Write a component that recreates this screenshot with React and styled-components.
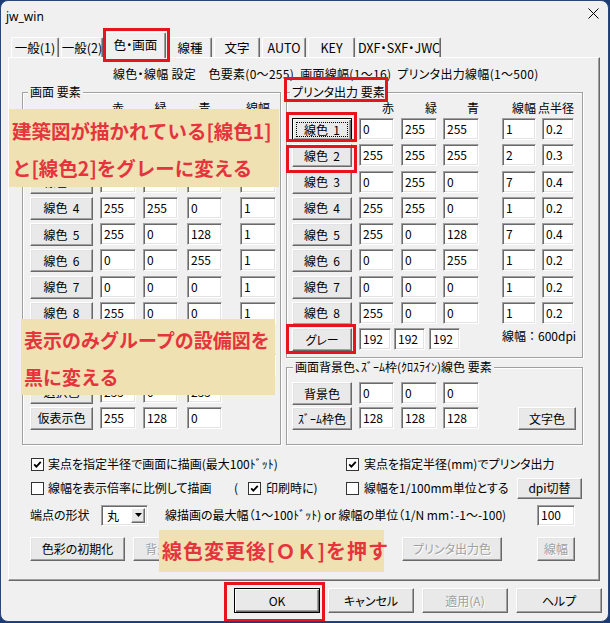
import React from 'react';
import styled, { createGlobalStyle, css } from 'styled-components';

const UI = `"Noto Sans CJK JP", "Noto Sans", sans-serif`;
const px = (v) => (typeof v === 'number' ? `${v}px` : v);

const GlobalStyle = createGlobalStyle`
  *, *::before, *::after { box-sizing: border-box; }
  html, body { margin: 0; padding: 0; }
  body { background: #1c3a73; width: 610px; height: 623px; overflow: hidden; }
`;

const Window = styled.div`
  position: relative;
  width: 609px;
  height: 622px;
  background: #f0f0f0;
  border: 1px solid #2a4676;
  border-radius: 8px;
  overflow: hidden;
  font-family: ${UI};
  font-size: 12px;
  color: #000;
  font-feature-settings: "palt" 1;
`;

const TitleBar = styled.div`
  height: 31px;
  display: flex;
  align-items: center;
  justify-content: space-between;
  padding: 0 9px 0 5px;
`;

const Title = styled.span`
  font-family: "Noto Sans", sans-serif;
  font-size: 12px;
  line-height: 16px;
`;

const CloseGlyph = styled.svg`
  align-self: flex-start;
  margin-top: 7px;
`;

const TabStrip = styled.div`
  position: relative;
  z-index: 1;
  display: flex;
  align-items: flex-end;
  gap: 2px;
  height: 25px;
  padding-left: 10px;
`;

const Tab = styled.div`
  flex: none;
  width: ${(p) => p.$w}px;
  height: ${(p) => (p.$active ? 26 : 20)}px;
  margin-bottom: ${(p) => (p.$active ? -1 : 0)}px;
  padding-bottom: ${(p) => (p.$active ? 2 : 0)}px;
  display: flex;
  align-items: center;
  justify-content: center;
  background: #f0f0f0;
  border: 1px solid;
  border-bottom: none;
  border-color: #fff #696969 transparent #fff;
  border-radius: 2px 2px 0 0;
  box-shadow: inset -1px 0 0 #a0a0a0;
  white-space: nowrap;
  line-height: 16px;
  font-size: 12.5px;
`;

const Panel = styled.div`
  margin-left: 7px;
  width: 592px;
  height: 524px;
  border: 1px solid;
  border-color: #fff #696969 #696969 #fff;
  box-shadow: inset -1px -1px 0 #a0a0a0;
  padding-top: 8px;
`;

const Heading = styled.div`
  line-height: 16px;
  padding-left: 104px;
  white-space: nowrap;
  letter-spacing: 0.3px;
`;

const Columns = styled.div`
  display: flex;
  align-items: flex-start;
  gap: 5px;
  margin-top: 10px;
  padding-left: 13px;
`;

const Stack = styled.div`
  display: flex;
  flex-direction: column;
  gap: 9px;
`;

const Group = styled.div`
  flex: none;
  width: ${(p) => p.$w}px;
  height: ${(p) => p.$h}px;
  border: 1px solid #a0a0a0;
  box-shadow: inset 1px 1px 0 #fff, 1px 1px 0 #fff;
  padding-left: ${(p) => p.$pl}px;
`;

const Legend = styled.div`
  width: fit-content;
  margin: -9px 0 0 ${(p) => px(p.$lm ?? -2)};
  padding: 0 2px;
  background: #f0f0f0;
  line-height: 16px;
  white-space: nowrap;
`;

const HeadRow = styled.div`
  display: flex;
  height: 16px;
  line-height: 16px;
`;

const HeadCell = styled.div`
  flex: none;
  width: ${(p) => p.$w}px;
  margin-left: ${(p) => px(p.$ml || 0)};
  display: flex;
  justify-content: ${(p) => (p.$align === 'right' ? 'flex-end' : 'center')};
  white-space: nowrap;
`;

const Rows = styled.div`
  display: flex;
  flex-direction: column;
  gap: ${(p) => p.$gap}px;
  margin-top: ${(p) => p.$mt}px;
`;

const Row = styled.div`
  display: flex;
  align-items: flex-start;
  height: 23px;
`;

const Btn = styled.button`
  position: relative;
  flex: none;
  width: ${(p) => p.$w}px;
  height: ${(p) => p.$h || 23}px;
  margin-left: ${(p) => px(p.$ml || 0)};
  padding: 0;
  font-family: inherit;
  font-size: 12px;
  font-feature-settings: "palt" 1;
  line-height: 16px;
  color: #000;
  background: #e9e9e9;
  border: 1px solid;
  border-color: #fff #696969 #696969 #fff;
  box-shadow: inset -1px -1px 0 #a0a0a0, inset 1px 1px 0 #e3e3e3;
  white-space: nowrap;
  display: flex;
  align-items: center;
  justify-content: center;
  ${(p) =>
    p.disabled &&
    css`
      color: #a0a0a0;
      text-shadow: 1px 1px 0 #fff;
    `}
  ${(p) =>
    (p.$focus || p.$default) &&
    css`
      border-color: #000;
      box-shadow: inset 1px 1px 0 #fff, inset -1px -1px 0 #696969, inset -2px -2px 0 #a0a0a0;
    `}
  ${(p) =>
    p.$focus &&
    css`
      &::after {
        content: '';
        position: absolute;
        inset: 3px;
        border: 1px dotted #000;
      }
    `}
`;

const Field = styled.div`
  flex: none;
  width: ${(p) => p.$w}px;
  height: ${(p) => p.$h || 22}px;
  margin-left: ${(p) => px(p.$ml || 0)};
  margin-right: ${(p) => px(p.$mr || 0)};
  background: #fff;
  border: 1px solid;
  border-color: #a0a0a0 #fff #fff #a0a0a0;
  box-shadow: inset 1px 1px 0 #696969, inset -1px -1px 0 #e3e3e3;
  padding-left: 3px;
  display: flex;
  align-items: center;
  white-space: nowrap;
  overflow: hidden;
  line-height: 16px;
`;

const Text = styled.span`
  flex: none;
  width: ${(p) => (p.$w ? `${p.$w}px` : 'auto')};
  margin-left: ${(p) => px(p.$ml || 0)};
  line-height: 16px;
  white-space: nowrap;
  font-feature-settings: ${(p) => (p.$plain ? 'normal' : '"palt" 1')};
`;

const OptArea = styled.div`
  margin-top: 11px;
  padding: 0 17px 0 22px;
`;

const OptRow = styled.div`
  display: flex;
  align-items: center;
  height: ${(p) => p.$h}px;
  margin-top: ${(p) => p.$mt || 0}px;
`;

const Half = styled.div`
  flex: none;
  width: ${(p) => (p.$w ? `${p.$w}px` : 'auto')};
  flex-grow: ${(p) => (p.$w ? 0 : 1)};
  display: flex;
  align-items: center;
`;

const CheckBox = styled.span`
  flex: none;
  width: 13px;
  height: 13px;
  margin-left: ${(p) => px(p.$ml || 0)};
  background: #fff;
  border: 1px solid #333;
  display: flex;
  align-items: center;
  justify-content: center;
`;

const Select = styled.div`
  flex: none;
  width: 47px;
  height: 21px;
  background: #fff;
  border: 1px solid;
  border-color: #a0a0a0 #fff #fff #a0a0a0;
  box-shadow: inset 1px 1px 0 #696969, inset -1px -1px 0 #e3e3e3;
  display: flex;
  align-items: center;
  justify-content: space-between;
  padding: 2px 2px 2px 5px;
`;

const DropBtn = styled.span`
  width: 14px;
  height: 15px;
  background: #e9e9e9;
  border: 1px solid;
  border-color: #fff #696969 #696969 #fff;
  box-shadow: inset -1px -1px 0 #a0a0a0;
  display: flex;
  align-items: center;
  justify-content: center;
`;

const Footer = styled.div`
  display: flex;
  justify-content: flex-end;
  gap: 8px;
  margin-top: 7px;
  padding-right: 6px;
`;

const Mark = styled.div`
  position: absolute;
  left: ${(p) => p.$x - 1}px;
  top: ${(p) => p.$y - 1}px;
  width: ${(p) => p.$w}px;
  height: ${(p) => p.$h}px;
  border: 3px solid #e5141d;
  pointer-events: none;
  z-index: 5;
`;

const Note = styled.div`
  position: absolute;
  left: ${(p) => p.$x - 1}px;
  top: ${(p) => p.$y - 1}px;
  width: ${(p) => p.$w}px;
  height: ${(p) => p.$h}px;
  padding: ${(p) => p.$pt}px 0 0 3px;
  background: #f0e1b3;
  color: #e6343d;
  font-weight: 700;
  font-size: ${(p) => p.$fs || 19}px;
  letter-spacing: ${(p) => p.$ls || 0}px;
  line-height: ${(p) => p.$lh}px;
  font-feature-settings: normal;
  white-space: nowrap;
  z-index: 4;
`;

const NoteLine = styled.div``;

const Check = ({ on, ml }) => (
  <CheckBox $ml={ml}>
    {on && (
      <svg width="9" height="9" viewBox="0 0 9 9">
        <path d="M1.2 4.3 L3.4 6.6 L7.8 1.8" stroke="#000" strokeWidth="1.8" fill="none" />
      </svg>
    )}
  </CheckBox>
);

const tabs = [
  ['一般(1)', 48],
  ['一般(2)', 42],
  ['色・画面', 61, true],
  ['線種', 44],
  ['文字', 46],
  ['AUTO', 44],
  ['KEY', 47],
  ['DXF・SXF・JWC', 84],
];

const leftCols = [
  { w: 36, ml: 7 },
  { w: 35, ml: 7 },
  { w: 35, ml: 9 },
  { w: 36, ml: 18 },
];

const rightCols = [
  { w: 35, ml: 7 },
  { w: 36, ml: 7 },
  { w: 36, ml: 6 },
  { w: 34, ml: 23 },
  { w: 32, ml: 6 },
];

const sp = '\u00a0\u00a0';

const screenRows = [
  [`線色${sp}1`, [0, 255, 255, 1]],
  [`線色${sp}2`, [255, 255, 255, 1]],
  [`線色${sp}3`, [0, 255, 0, 1]],
  [`線色${sp}4`, [255, 255, 0, 1]],
  [`線色${sp}5`, [255, 0, 128, 1]],
  [`線色${sp}6`, [0, 0, 255, 1]],
  [`線色${sp}7`, [0, 0, 0, 1]],
  [`線色${sp}8`, [255, 0, 0, 1]],
  ['グレー', [192, 192, 192]],
  ['補助線色', [255, 128, 255, 1]],
  ['選択色', [255, 0, 255]],
  ['仮表示色', [255, 128, 0]],
];

const printRows = [
  [`線色${sp}1`, [0, 255, 255, 1, '0.2']],
  [`線色${sp}2`, [255, 255, 255, 2, '0.3']],
  [`線色${sp}3`, [0, 255, 0, 7, '0.4']],
  [`線色${sp}4`, [255, 255, 0, 1, '0.2']],
  [`線色${sp}5`, [255, 0, 128, 7, '0.4']],
  [`線色${sp}6`, [0, 0, 255, 1, '0.2']],
  [`線色${sp}7`, [0, 0, 0, 1, '0.2']],
  [`線色${sp}8`, [255, 0, 0, 1, '0.2']],
];

const grayCols = [
  { w: 32, ml: 7 },
  { w: 31, ml: 3 },
  { w: 31, ml: 4 },
];

const bgCols = rightCols.slice(0, 3);

export default function App() {
  return (
    <>
      <GlobalStyle />
      <Window>
        <TitleBar>
          <Title>jw_win</Title>
          <CloseGlyph width="11" height="11" viewBox="0 0 11 11">
            <path d="M0.5 0.5 L10.5 10.5 M10.5 0.5 L0.5 10.5" stroke="#000" strokeWidth="1" />
          </CloseGlyph>
        </TitleBar>

        <TabStrip>
          {tabs.map(([label, w, active]) => (
            <Tab key={label} $w={w} $active={active}>
              {label}
            </Tab>
          ))}
        </TabStrip>

        <Panel>
          <Heading>
            線色・線幅 設定　色要素(0〜255){sp}画面線幅(1〜16){sp}プリンタ出力線幅(1〜500)
          </Heading>

          <Columns>
            <Group $w={259} $h={353} $pl={7}>
              <Legend>画面 要素</Legend>
              <HeadRow>
                <HeadCell $w={63} />
                {['赤', '緑', '青', '線幅'].map((h, i) => (
                  <HeadCell key={h} $w={leftCols[i].w} $ml={leftCols[i].ml}>
                    {h}
                  </HeadCell>
                ))}
              </HeadRow>
              <Rows $gap={3.25} $mt={2}>
                {screenRows.map(([label, vals]) => (
                  <Row key={label}>
                    <Btn $w={63}>{label}</Btn>
                    {vals.map((v, i) => (
                      <Field key={i} $w={leftCols[i].w} $ml={leftCols[i].ml}>
                        {v}
                      </Field>
                    ))}
                  </Row>
                ))}
              </Rows>
            </Group>

            <Stack>
              <Group $w={297} $h={266} $pl={5}>
                <Legend>プリンタ出力 要素</Legend>
                <HeadRow>
                  <HeadCell $w={60} />
                  {['赤', '緑', '青', '線幅', '点半径'].map((h, i) => (
                    <HeadCell key={h} $w={rightCols[i].w} $ml={rightCols[i].ml} $align="right">
                      {h}
                    </HeadCell>
                  ))}
                </HeadRow>
                <Rows $gap={3.25} $mt={2}>
                  {printRows.map(([label, vals], r) => (
                    <Row key={label}>
                      <Btn $w={60} $focus={r === 0}>
                        {label}
                      </Btn>
                      {vals.map((v, i) => (
                        <Field key={i} $w={rightCols[i].w} $ml={rightCols[i].ml}>
                          {v}
                        </Field>
                      ))}
                    </Row>
                  ))}
                  <Row>
                    <Btn $w={60}>グレー</Btn>
                    {grayCols.map((c, i) => (
                      <Field key={i} $w={c.w} $ml={c.ml}>
                        192
                      </Field>
                    ))}
                    <Text $ml={42} $plain>
                      線幅：600dpi
                    </Text>
                  </Row>
                </Rows>
              </Group>

              <Group $w={297} $h={78} $pl={5}>
                <Legend $lm={1}>画面背景色、ｽﾞｰﾑ枠(ｸﾛｽﾗｲﾝ)線色 要素</Legend>
                <Rows $gap={2} $mt={7}>
                  <Row>
                    <Btn $w={60}>背景色</Btn>
                    {[0, 0, 0].map((v, i) => (
                      <Field key={i} $w={bgCols[i].w} $ml={bgCols[i].ml}>
                        {v}
                      </Field>
                    ))}
                  </Row>
                  <Row>
                    <Btn $w={60}>ｽﾞｰﾑ枠色</Btn>
                    {[128, 128, 128].map((v, i) => (
                      <Field key={i} $w={bgCols[i].w} $ml={bgCols[i].ml}>
                        {v}
                      </Field>
                    ))}
                    <Btn $w={58} $ml={39}>
                      文字色
                    </Btn>
                  </Row>
                </Rows>
              </Group>
            </Stack>
          </Columns>

          <OptArea>
            <OptRow $h={16}>
              <Half $w={315}>
                <Check on />
                <Text $ml={4}>実点を指定半径で画面に描画(最大100ﾄﾞｯﾄ)</Text>
              </Half>
              <Half>
                <Check on />
                <Text $ml={5}>実点を指定半径(mm)でプリンタ出力</Text>
              </Half>
            </OptRow>

            <OptRow $h={22} $mt={5}>
              <Half $w={315}>
                <Half $w={203}>
                  <Check />
                  <Text $ml={4}>線幅を表示倍率に比例して描画</Text>
                </Half>
                <Text $w={14}>(</Text>
                <Check on />
                <Text $ml={5}>印刷時に)</Text>
              </Half>
              <Half>
                <Check />
                <Text $ml={5}>線幅を1/100mm単位とする</Text>
                <Btn $w={65} $h={21} $ml="auto">
                  dpi切替
                </Btn>
              </Half>
            </OptRow>

            <OptRow $h={22} $mt={5}>
              <Text $w={71} $ml={-1}>
                端点の形状
              </Text>
              <Select>
                <span>丸</span>
                <DropBtn>
                  <svg width="7" height="4" viewBox="0 0 7 4">
                    <polygon points="0,0 7,0 3.5,4" fill="#000" />
                  </svg>
                </DropBtn>
              </Select>
              <Text $ml={17}>線描画の最大幅（1〜100ﾄﾞｯﾄ) or 線幅の単位（1/N mm：-1〜-100)</Text>
              <Field $w={38} $h={21} $ml="auto" $mr={7}>
                100
              </Field>
            </OptRow>

            <OptRow $h={24} $mt={11}>
              <Btn $w={95} $h={24} $ml={-1}>
                色彩の初期化
              </Btn>
              <Btn $w={95} $h={24} $ml={8} disabled>
                背景色を白に
              </Btn>
              <Btn $w={100} $h={24} $ml={174} disabled>
                プリンタ出力色
              </Btn>
              <Btn $w={38} $h={24} $ml={35} disabled>
                線幅
              </Btn>
            </OptRow>
          </OptArea>
        </Panel>

        <Footer>
          <Btn $w={86} $h={25} $default>
            OK
          </Btn>
          <Btn $w={86} $h={25}>
            キャンセル
          </Btn>
          <Btn $w={86} $h={25} disabled>
            適用(A)
          </Btn>
          <Btn $w={86} $h={25}>
            ヘルプ
          </Btn>
        </Footer>

        <Note $x={9} $y={109} $w={270} $h={78} $pt={3} $lh={37} $fs={19.5}>
          <NoteLine>建築図が描かれている[線色1]</NoteLine>
          <NoteLine>と[線色2]をグレーに変える</NoteLine>
        </Note>
        <Note $x={21} $y={319} $w={254} $h={76} $pt={2} $lh={37}>
          <NoteLine>表示のみグループの設備図を</NoteLine>
          <NoteLine>黒に変える</NoteLine>
        </Note>
        <Note $x={159} $y={530} $w={225} $h={42} $pt={0} $lh={42} $fs={20} $ls={1}>
          <NoteLine>線色変更後[ＯＫ]を押す</NoteLine>
        </Note>

        <Mark $x={103} $y={28} $w={67} $h={34} />
        <Mark $x={284} $y={77} $w={104} $h={25} />
        <Mark $x={286} $y={112} $w={71} $h={30} />
        <Mark $x={286} $y={145} $w={71} $h={28} />
        <Mark $x={286} $y={324} $w={70} $h={30} />
        <Mark $x={224} $y={582} $w={101} $h={40} />
      </Window>
    </>
  );
}
